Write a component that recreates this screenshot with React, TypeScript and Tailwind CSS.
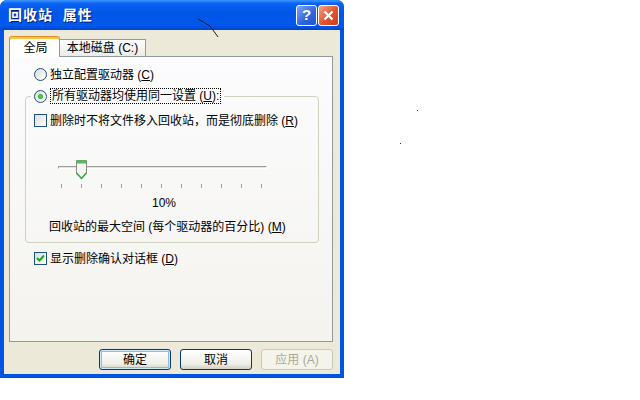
import React from 'react';

function Radio({ checked }: { checked?: boolean }) {
  return (
    <span className="relative flex h-[13px] w-[13px] shrink-0 items-center justify-center rounded-full border border-[#1c5180] bg-[linear-gradient(135deg,#dcdcd7,#ffffff)]">
      {checked && (
        <span className="h-[5px] w-[5px] rounded-full bg-[radial-gradient(circle,#55d551,#21a121)]" />
      )}
    </span>
  );
}

function Check({ checked }: { checked?: boolean }) {
  return (
    <span className="flex h-[13px] w-[13px] shrink-0 items-center justify-center border border-[#1c5180] bg-[linear-gradient(135deg,#dcdcd7,#ffffff)]">
      {checked && (
        <svg width="9" height="9" viewBox="0 0 9 9">
          <path d="M1 4 L3.5 6.5 L8 1.5" stroke="#21a121" strokeWidth="2" fill="none" />
        </svg>
      )}
    </span>
  );
}

function XpButton({
  label,
  isDefault,
  disabled,
}: {
  label: string;
  isDefault?: boolean;
  disabled?: boolean;
}) {
  return (
    <div
      className={`flex h-[21px] w-[72px] items-center justify-center rounded-[3px] border text-[12px] ${
        disabled
          ? 'border-[#c9c7ba] bg-[#f5f4ea] text-[#aca899]'
          : 'border-[#003c74] bg-[linear-gradient(#ffffff,#f0f0ea_70%,#d6d0c5)] text-black'
      } ${isDefault ? 'shadow-[inset_0_0_0_1px_#cee7ff,inset_0_0_0_2px_#98b8ea]' : ''}`}
    >
      {label}
    </div>
  );
}

function Slider() {
  const ticks = [0, 1, 2, 3, 4, 5, 6, 7, 8, 9, 10];
  return (
    <div className="relative ml-[31px] h-[32px] w-[212px]">
      {/* track */}
      <div className="absolute left-[1px] top-[6px] h-[3px] w-[209px] border border-[#9d9c99] border-b-white border-r-white bg-[#e6e5df]" />
      {/* thumb */}
      <svg className="absolute left-[18px] top-[-1px]" width="13" height="21" viewBox="0 0 13 21">
        <path d="M1.5 1.5 H11.5 V14 L6.5 19.5 L1.5 14 Z" fill="#f7f7f4" stroke="#8a8a80" />
        <rect x="1.5" y="1.5" width="10" height="3" fill="#4cc05a" />
        <path d="M1.5 14 L6.5 19.5 L11.5 14" fill="none" stroke="#31a340" strokeWidth="1.5" />
      </svg>
      {/* ticks */}
      {ticks.map((t) => (
        <div
          key={t}
          className="absolute top-[24px] h-[4px] w-px bg-[#a0a0a0]"
          style={{ left: 4 + t * 20 }}
        />
      ))}
    </div>
  );
}

export default function App() {
  return (
    <div className="relative h-[400px] w-[640px] overflow-hidden bg-white font-[family-name:'Liberation_Sans','Noto_Sans_CJK_SC',sans-serif] text-[12px] leading-[14px] text-black">
      <div className="flex h-[378px] w-[344px] flex-col rounded-t-[7px] bg-[#0054e3]">
        {/* title bar */}
        <div className="flex h-[30px] shrink-0 items-center rounded-t-[7px] bg-[linear-gradient(#3d95ff_0%,#0a62f2_12%,#0055e5_45%,#0058ee_85%,#0043c9_100%)] pl-[8px] pr-[5px]">
          <span className="flex-1 text-[14px] font-bold tracking-[1px] text-white [text-shadow:1px_1px_#0a1874]">
            回收站&nbsp; 属性
          </span>
          <div className="flex gap-[1px]">
            <div className="flex h-[21px] w-[21px] items-center justify-center rounded-[3px] border border-white bg-[linear-gradient(135deg,#7ea6f5,#2f63dc_60%,#2154d1)] text-[15px] font-bold text-white">
              ?
            </div>
            <div className="flex h-[21px] w-[21px] items-center justify-center rounded-[3px] border border-white bg-[linear-gradient(135deg,#f3a48d,#e2532c_55%,#c9401e)]">
              <svg width="11" height="11" viewBox="0 0 11 11">
                <path d="M1.5 1.5 L9.5 9.5 M9.5 1.5 L1.5 9.5" stroke="white" strokeWidth="2.2" />
              </svg>
            </div>
          </div>
        </div>

        {/* body */}
        <div className="mx-[4px] mb-[4px] flex flex-1 flex-col bg-[#ece9d8] pl-[5px] pr-[7px] pt-[5px]">
          {/* tabs */}
          <div className="flex h-[21px] items-end">
            <div className="relative z-10 -mb-px flex h-[21px] w-[51px] items-start justify-center rounded-t-[3px] border border-b-0 border-[#919b9c] border-t-[#e68b2c] bg-white pl-[2px] pt-[3px] shadow-[inset_0_2px_#ffc73c]">
              <span className="mt-[1px]">全局</span>
            </div>
            <div className="flex h-[17px] w-[86px] items-center justify-center border border-b-0 border-l-0 border-[#919b9c] bg-[linear-gradient(#fefefe,#ecebe6)]">
              本地磁盘 (C:)
            </div>
          </div>

          {/* panel */}
          <div className="flex h-[286px] flex-col border border-[#919b9c] bg-[linear-gradient(#fcfcfe,#f4f3ee)] pt-[11px]">
            <div className="ml-[24px] flex h-[13px] items-center gap-[3px]">
              <Radio />
              <span>独立配置驱动器 (<span className="underline">C</span>)</span>
            </div>

            <fieldset className="ml-[15px] mr-[13px] mt-[7px] rounded-[4px] border border-[#d0d0bf] px-0 pb-[8px]">
              <legend className="ml-[5px] flex items-center gap-[3px] px-[3px]">
                <Radio checked />
                <span className="border border-dotted border-black px-[1px]">
                  所有驱动器均使用同一设置 (<span className="underline">U</span>):
                </span>
              </legend>
              <div className="ml-[8px] mt-[10px] flex h-[13px] items-center gap-[3px]">
                <Check />
                <span>
                  删除时不将文件移入回收站，而是彻底删除 (<span className="underline">R</span>)
                </span>
              </div>
              <div className="mt-[33px]">
                <Slider />
              </div>
              <div className="mt-[4px] ml-[126px] h-[14px]">10%</div>
              <div className="ml-[23px] mt-[10px] h-[14px]">
                回收站的最大空间 (每个驱动器的百分比) (<span className="underline">M</span>)
              </div>
            </fieldset>

            <div className="ml-[24px] mt-[9px] flex h-[13px] items-center gap-[3px]">
              <Check checked />
              <span>显示删除确认对话框 (<span className="underline">D</span>)</span>
            </div>
          </div>

          {/* buttons */}
          <div className="mt-[7px] flex justify-end gap-[9px]">
            <XpButton label="确定" isDefault />
            <XpButton label="取消" />
            <XpButton label="应用 (A)" disabled />
          </div>
        </div>
      </div>

      {/* stray marks in the screenshot */}
      <svg className="absolute left-[196px] top-[17px]" width="26" height="22" viewBox="0 0 26 22">
        <path d="M2 2 L14 9 L22 20" stroke="#1a1a1a" strokeWidth="1" fill="none" />
      </svg>
      <div className="absolute left-[417px] top-[110px] h-px w-px bg-[#333]" />
      <div className="absolute left-[400px] top-[143px] h-px w-px bg-[#333]" />
    </div>
  );
}
